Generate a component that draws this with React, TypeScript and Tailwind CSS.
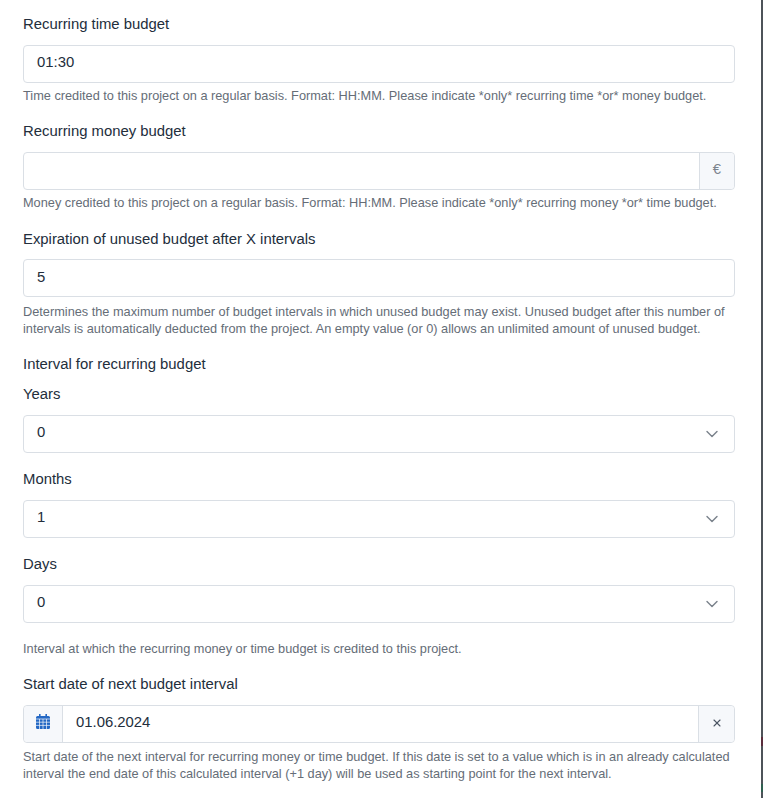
import { ChevronDown, X } from "lucide-react";

const inputBorder = "border border-[#dadfe5] rounded-[4px]";

const Label = ({ children, className = "leading-[18px]" }: { children: string; className?: string }) => (
  <label className={`block h-[22px] mb-2 text-[14.875px] ${className} text-[#232e3c]`}>{children}</label>
);

const Help = ({ children, className = "mt-1" }: { children: string; className?: string }) => (
  <p className={`${className} text-[12.75px] leading-[17px] text-[#656d77]`}>{children}</p>
);

const TextInput = ({ value, className = "pb-1" }: { value?: string; className?: string }) => (
  <div className={`h-[38px] px-[13px] ${className} flex items-center bg-white text-[14.875px] text-[#232e3c] ${inputBorder}`}>
    {value}
  </div>
);

const SelectBox = ({ value }: { value: string }) => (
  <div className={`h-[38px] px-[13px] flex items-center justify-between bg-white text-[14.875px] text-[#232e3c] ${inputBorder}`}>
    <span className="-mt-1">{value}</span>
    <ChevronDown className="w-[20px] h-[20px] -mr-[1px] text-[#7b838c]" strokeWidth={1.7} />
  </div>
);

const CalendarIcon = () => (
  <svg viewBox="0 0 14 15" className="w-[14px] h-[15px] text-[#2468c4]">
    <path fill="currentColor" d="M3 0h1.6v2H9.4V0H11v2h1.5A1.5 1.5 0 0 1 14 3.5v10a1.5 1.5 0 0 1-1.5 1.5h-11A1.5 1.5 0 0 1 0 13.500v-10A1.500 1.500 0 0 1 1.500 2H3z" />
    <path stroke="#f6f8fb" strokeWidth="0.7" d="M0 5h14M0 8.200h14M0 11.400h14M3.500 5V15M7 5V15M10.500 5V15" />
  </svg>
);

export default function App() {
  return (
    <div className="flex h-[798px] overflow-hidden bg-white font-['Liberation_Sans',Arial,sans-serif]">
      <div className="flex-1 pl-[23px] pr-[26px] pt-[15px]">
        <div>
          <Label>Recurring time budget</Label>
          <TextInput value="01:30" />
          <Help>Time credited to this project on a regular basis. Format: HH:MM. Please indicate *only* recurring time *or* money budget.</Help>
        </div>

        <div className="mt-[18px]">
          <Label>Recurring money budget</Label>
          <div className={`h-[38px] flex bg-white ${inputBorder}`}>
            <div className="flex-1" />
            <div className="w-[35px] pb-1 flex items-center justify-center border-l border-[#dadfe5] bg-[#f6f8fb] rounded-r-[4px] text-[14.875px] text-[#7b838c]">€</div>
          </div>
          <Help>Money credited to this project on a regular basis. Format: HH:MM. Please indicate *only* recurring money *or* time budget.</Help>
        </div>

        <div className="mt-[18px]">
          <Label className="leading-[20px]">Expiration of unused budget after X intervals</Label>
          <TextInput value="5" className="pb-[2px]" />
          <Help className="mt-[6px] -mb-[2px]">Determines the maximum number of budget intervals in which unused budget may exist. Unused budget after this number of intervals is automatically deducted from the project. An empty value (or 0) allows an unlimited amount of unused budget.</Help>
        </div>

        <div className="mt-[18px]">
          <div className="h-[22px] text-[14.875px] leading-[22px] text-[#232e3c]">Interval for recurring budget</div>
          <div className="mt-[10px]">
            <Label>Years</Label>
            <SelectBox value="0" />
          </div>
          <div className="mt-[17px]">
            <Label>Months</Label>
            <SelectBox value="1" />
          </div>
          <div className="mt-[17px]">
            <Label>Days</Label>
            <SelectBox value="0" />
          </div>
          <Help className="mt-[17px]">Interval at which the recurring money or time budget is credited to this project.</Help>
        </div>

        <div className="mt-[18px]">
          <Label>Start date of next budget interval</Label>
          <div className={`h-[38px] flex bg-white ${inputBorder}`}>
            <div className="w-[39px] pb-[5px] flex items-center justify-center border-r border-[#dadfe5] bg-[#f6f8fb] rounded-l-[4px]">
              <CalendarIcon />
            </div>
            <div className="flex-1 pl-[13px] pb-1 flex items-center text-[14.875px] text-[#232e3c]">01.06.2024</div>
            <div className="w-[36px] pb-[2px] flex items-center justify-center border-l border-[#dadfe5] bg-[#f6f8fb] rounded-r-[4px]">
              <X className="w-[12px] h-[12px] text-[#4b5563]" strokeWidth={2.2} />
            </div>
          </div>
          <Help className="mt-[5px]">Start date of the next interval for recurring money or time budget. If this date is set to a value which is in an already calculated interval the end date of this calculated interval (+1 day) will be used as starting point for the next interval.</Help>
        </div>
      </div>

      {/* dark edge of the page behind the modal, with the bits of page colour showing through */}
      <div className="w-[2px] flex flex-col bg-[#4e5359]">
        <div className="h-[737px] shrink-0" />
        <div className="h-[9px] shrink-0 bg-[#5a2d3c]" />
        <div className="h-[38px] shrink-0" />
        <div className="h-[8px] shrink-0 bg-[#2f5f50]" />
      </div>
    </div>
  );
}
